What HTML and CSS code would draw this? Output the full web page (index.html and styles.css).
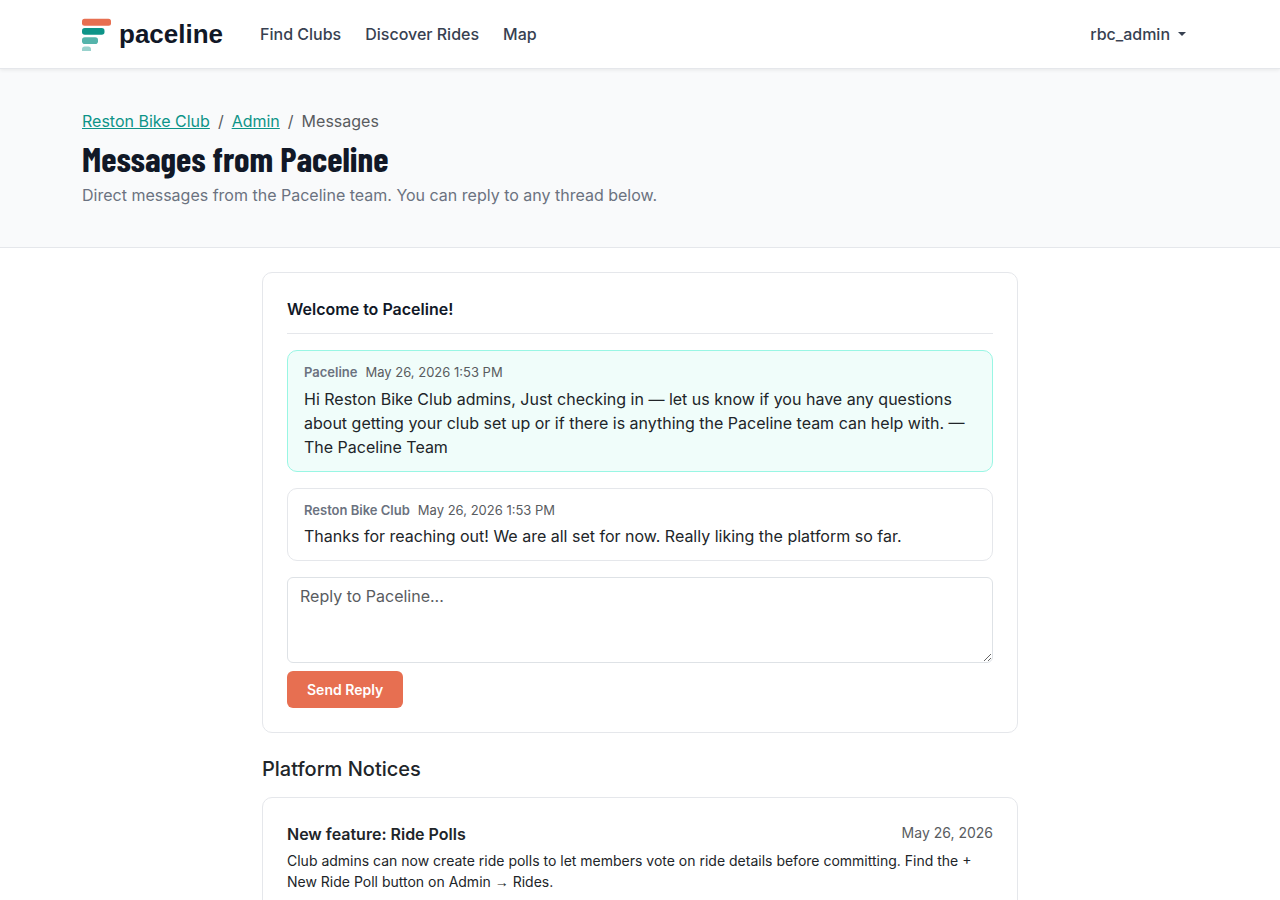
FILE: index.html
```html
<!DOCTYPE html>
<html lang="en">
<head>
    <meta charset="UTF-8">
    <meta name="viewport" content="width=device-width, initial-scale=1.0">
    <title>Messages from Paceline</title>
    <link rel="stylesheet" href="styles.css">
</head>
<body>
    <header class="navbar">
        <div class="container navbar-inner">
            <a class="brand" href="/">
                <svg class="brand-mark" width="29" height="33" viewBox="0 0 29 33" aria-hidden="true">
                    <rect x="0" y="0.7" width="29" height="7" rx="2.5" fill="#e76f51"/>
                    <rect x="0" y="10" width="22.5" height="6.8" rx="2.8" fill="#0d9488"/>
                    <rect x="0" y="19.2" width="16" height="6.8" rx="2.8" fill="#0d9488" opacity="0.7"/>
                    <path d="M0 33v-1.8a2.8 2.8 0 0 1 2.8-2.8h3.4a2.8 2.8 0 0 1 2.8 2.8V33z" fill="#0d9488" opacity="0.42"/>
                </svg>
                <span>paceline</span>
            </a>
            <nav class="nav-links">
                <a href="/clubs">Find Clubs</a>
                <a href="/rides">Discover Rides</a>
                <a href="/map">Map</a>
            </nav>
            <button class="user-menu" type="button" aria-haspopup="true">rbc_admin</button>
        </div>
    </header>

    <section class="page-header">
        <div class="container">
            <nav class="breadcrumb" aria-label="Breadcrumb">
                <a href="/clubs/reston">Reston Bike Club</a>
                <span>/</span>
                <a href="/clubs/reston/admin">Admin</a>
                <span>/</span>
                <span>Messages</span>
            </nav>
            <h1>Messages from Paceline</h1>
            <p>Direct messages from the Paceline team. You can reply to any thread below.</p>
        </div>
    </section>

    <main class="content">
        <section class="card">
            <h2 class="thread-title">Welcome to Paceline!</h2>
            <article class="message message-team">
                <div class="message-meta"><strong>Paceline</strong><span>May 26, 2026 1:53 PM</span></div>
                <p>Hi Reston Bike Club admins, Just checking in — let us know if you have any questions about getting your club set up or if there is anything the Paceline team can help with. — The Paceline Team</p>
            </article>
            <article class="message">
                <div class="message-meta"><strong>Reston Bike Club</strong><span>May 26, 2026 1:53 PM</span></div>
                <p>Thanks for reaching out! We are all set for now. Really liking the platform so far.</p>
            </article>
            <form class="reply-form">
                <textarea name="body" rows="3" placeholder="Reply to Paceline..." aria-label="Reply to Paceline"></textarea>
                <button class="btn" type="submit">Send Reply</button>
            </form>
        </section>

        <h2 class="section-title">Platform Notices</h2>
        <article class="card">
            <div class="notice-head">
                <h3>New feature: Ride Polls</h3>
                <time datetime="2026-05-26">May 26, 2026</time>
            </div>
            <p class="notice-body">Club admins can now create ride polls to let members vote on ride details before committing. Find the + New Ride Poll button on Admin <span class="arrow">→</span> Rides.</p>
        </article>
    </main>
</body>
</html>
```
FILE: styles.css
```css
* {
    box-sizing: border-box;
}
body {
    margin: 0;
    font-family: Inter, sans-serif;
    font-size: 16px;
    line-height: 1.5;
    color: #212529;
    background: #fff;
}
h1, h2, h3, p {
    margin: 0;
}
.container {
    max-width: 1140px;
    margin: 0 auto;
    padding: 0 12px;
}

/* Navbar */
.navbar {
    position: relative;
    background: #fff;
    border-bottom: 1px solid #e5e7eb;
    box-shadow: 0 1px 4px rgba(0, 0, 0, 0.08);
}
.navbar-inner {
    display: flex;
    align-items: center;
    min-height: 68px;
}
.brand {
    display: flex;
    align-items: center;
    gap: 8px;
    margin-right: 37px;
    font-family: "Liberation Sans", Arial, sans-serif;
    font-size: 26px;
    font-weight: 700;
    color: #111827;
    text-decoration: none;
}
.nav-links {
    display: flex;
    gap: 24px;
}
.nav-links a {
    color: #374151;
    font-weight: 500;
    text-decoration: none;
}
.user-menu {
    display: flex;
    align-items: center;
    gap: 8px;
    margin-left: auto;
    padding: 8px 12px;
    border: 0;
    background: none;
    font: inherit;
    font-weight: 500;
    color: #374151;
    cursor: pointer;
}
.user-menu::after {
    content: "";
    border-top: 4px solid;
    border-right: 4px solid transparent;
    border-left: 4px solid transparent;
}

/* Page header */
.page-header {
    padding: 40px 0;
    background: #f9fafb;
    border-bottom: 1px solid #e5e7eb;
}
.breadcrumb {
    display: flex;
    gap: 8px;
    margin-bottom: 4px;
    color: #595c5f;
}
.breadcrumb a {
    color: #0d9488;
}
.page-header h1 {
    margin-bottom: 4px;
    font-family: "Barlow Condensed", "Liberation Sans Narrow", "Liberation Sans", sans-serif;
    font-size: 35px;
    font-weight: 700;
    line-height: 42px;
    color: #111827;
}
.page-header p {
    color: #6b7280;
}

/* Messages */
.content {
    max-width: 780px;
    margin: 0 auto;
    padding: 24px 12px;
}
.card {
    padding: 24px;
    border: 1px solid #e5e7eb;
    border-radius: 10px;
}
.thread-title {
    margin-bottom: 16px;
    padding-bottom: 12px;
    border-bottom: 1px solid #e5e7eb;
    font-size: 16px;
    font-weight: 600;
    color: #111827;
}
.message {
    margin-bottom: 16px;
    padding: 12px 16px;
    border: 1px solid #e5e7eb;
    border-radius: 10px;
}
.message-team {
    background: #f0fdfa;
    border-color: #99f6e4;
}
.message-meta {
    display: flex;
    gap: 8px;
    margin-bottom: 4px;
    font-size: 13px;
    color: #595c5f;
}
.message-meta strong {
    font-weight: 600;
    color: #6b7280;
}
.reply-form textarea {
    display: block;
    width: 100%;
    margin-bottom: 8px;
    padding: 6px 12px;
    border: 1px solid #dee2e6;
    border-radius: 6px;
    font: inherit;
    color: #212529;
    resize: vertical;
}
.reply-form textarea::placeholder {
    color: #595c5f;
}
.btn {
    display: block;
    padding: 8px 20px;
    border: 0;
    border-radius: 6px;
    background: #e76f51;
    font: inherit;
    font-size: 14px;
    font-weight: 600;
    color: #fff;
    cursor: pointer;
}

/* Notices */
.section-title {
    margin: 24px 0 16px;
    font-size: 20px;
    font-weight: 500;
    line-height: 24px;
}
.notice-head {
    display: flex;
    justify-content: space-between;
    margin-bottom: 4px;
}
.notice-head h3 {
    font-size: 16px;
    font-weight: 600;
}
.notice-head time {
    font-size: 14px;
    color: #595c5f;
}
.notice-body {
    font-size: 14px;
}
.arrow {
    font-family: "Liberation Sans", Arial, sans-serif;
}
```
